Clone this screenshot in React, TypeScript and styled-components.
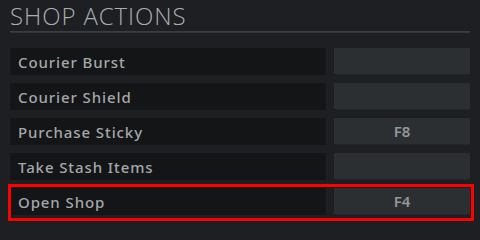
import styled, { createGlobalStyle } from 'styled-components';

const GlobalStyle = createGlobalStyle`
  html, body {
    margin: 0;
    padding: 0;
    background: #1e1f23;
  }
  body {
    font-family: 'Open Sans', 'Noto Sans', sans-serif;
    min-height: 236px;
  }
`;

const Panel = styled.div`
  width: 460px;
  padding: 1px 10px 20px 10px;
`;

const Title = styled.h2`
  margin: 0;
  font-family: 'Open Sans', sans-serif;
  font-weight: 300;
  font-size: 24px;
  line-height: 29px;
  letter-spacing: 0.9px;
  color: #a9aeb1;
`;

const Divider = styled.div`
  height: 1px;
  margin-top: 1px;
  background: #3b3d41;
  border-bottom: 1px dotted #2c2e32;
`;

const List = styled.div`
  display: flex;
  flex-direction: column;
  gap: 8px;
  margin-top: 15px;
`;

const Row = styled.div<{ $highlight?: boolean }>`
  position: relative;
  display: grid;
  grid-template-columns: 316px 136px;
  column-gap: 8px;
  height: 27px;

  ${({ $highlight }) =>
    $highlight &&
    `
    &::after {
      content: '';
      position: absolute;
      top: -4px;
      left: -2px;
      right: -4px;
      bottom: -6px;
      border: 3px solid #ff0000;
      pointer-events: none;
      z-index: 2;
    }
  `}
`;

const Label = styled.div`
  display: flex;
  align-items: center;
  padding-left: 8px;
  background-color: #141516;
  background-image: radial-gradient(#1d1f20 0.6px, transparent 0.7px);
  background-size: 4px 4px;
  font-family: 'Noto Sans', sans-serif;
  font-weight: 500;
  font-size: 15px;
  letter-spacing: 0.9px;
  color: #a4a8aa;
`;

const Key = styled.div`
  display: flex;
  align-items: center;
  justify-content: center;
  background: #2c2f31;
  border-bottom: 1px dotted #1a1b1d;
  font-family: 'Noto Sans', sans-serif;
  font-weight: 600;
  font-size: 15px;
  color: #92989b;
`;

const actions = [
  { name: 'Courier Burst', key: '' },
  { name: 'Courier Shield', key: '' },
  { name: 'Purchase Sticky', key: 'F8' },
  { name: 'Take Stash Items', key: '' },
  { name: 'Open Shop', key: 'F4', highlight: true },
];

function App() {
  return (
    <>
      <GlobalStyle />
      <Panel>
        <Title>SHOP ACTIONS</Title>
        <Divider />
        <List>
          {actions.map((a) => (
            <Row key={a.name} $highlight={a.highlight}>
              <Label>{a.name}</Label>
              <Key>{a.key}</Key>
            </Row>
          ))}
        </List>
      </Panel>
    </>
  );
}

export default App;
